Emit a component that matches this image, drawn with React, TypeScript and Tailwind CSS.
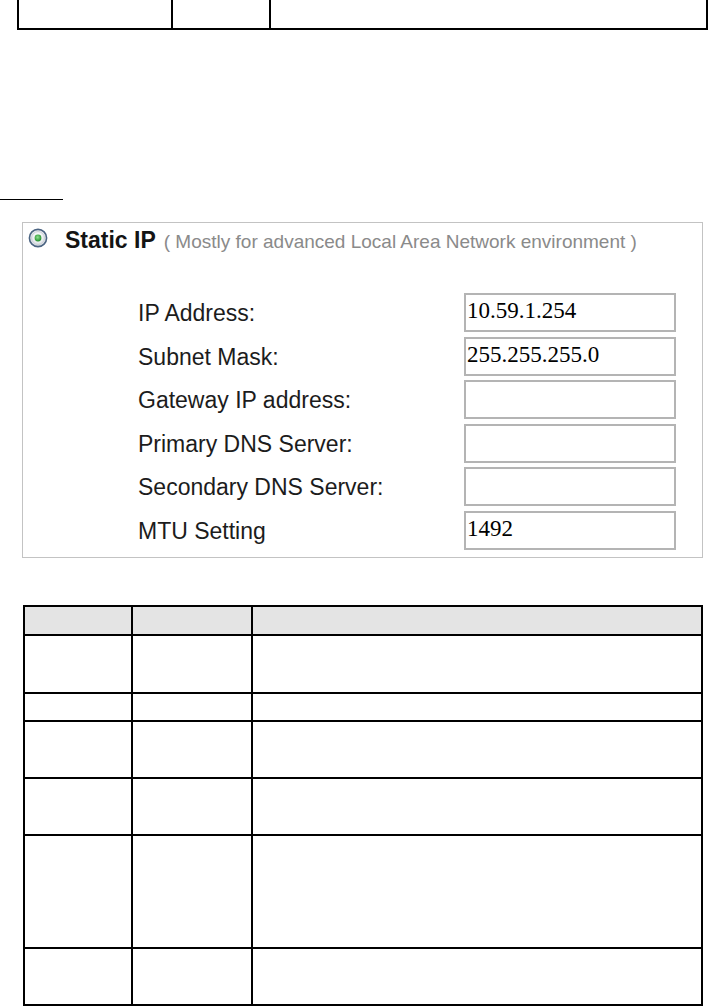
import React from 'react'

const fields = [
  { label: 'IP Address:', value: '10.59.1.254' },
  { label: 'Subnet Mask:', value: '255.255.255.0' },
  { label: 'Gateway IP address:', value: '' },
  { label: 'Primary DNS Server:', value: '' },
  { label: 'Secondary DNS Server:', value: '' },
  { label: 'MTU Setting', value: '1492' },
]

// heights of the rows of the lower table, border included
const rowHeights = ['h-[58px]', 'h-[28px]', 'h-[57px]', 'h-[57px]', 'h-[113px]', 'h-[57px]']

function Radio() {
  return (
    <svg width="20" height="20" viewBox="0 0 20 20" className="mt-[1px] shrink-0">
      <defs>
        <radialGradient id="rg" cx="50%" cy="40%" r="60%">
          <stop offset="0%" stopColor="#ffffff" />
          <stop offset="100%" stopColor="#d8dde3" />
        </radialGradient>
        <radialGradient id="dot" cx="45%" cy="40%" r="60%">
          <stop offset="0%" stopColor="#8fe08f" />
          <stop offset="100%" stopColor="#1f8f2a" />
        </radialGradient>
      </defs>
      <circle cx="10" cy="10" r="8.6" fill="url(#rg)" stroke="#4b6482" strokeWidth="1.6" />
      <circle cx="10" cy="10" r="6.4" fill="none" stroke="#c9ced6" strokeWidth="1" />
      <circle cx="10" cy="10" r="3.4" fill="url(#dot)" />
    </svg>
  )
}

export default function App() {
  return (
    <div className="w-[709px] h-[1006px] bg-white overflow-hidden font-['Liberation_Sans',Arial,sans-serif]">
      {/* cut-off table at the top */}
      <div className="ml-[17px] w-[691px] h-[30px] border-x-2 border-b-2 border-black grid grid-cols-[154px_98px_1fr]">
        <div className="border-r-2 border-black" />
        <div className="border-r-2 border-black" />
        <div />
      </div>

      <div className="mt-[169px] w-[63px] h-px bg-black" />

      {/* Static IP panel */}
      <div className="ml-[22px] mt-[22px] w-[681px] h-[336px] border border-[#c3c3c3]">
        <div className="flex items-start pl-[5px] pt-[4px]">
          <Radio />
          <div className="ml-[17px] flex items-baseline leading-[26px]">
            <span className="text-[23px] font-bold text-[#141414]">Static IP</span>
            <span className="ml-[8px] text-[19px] text-[#8a8a8a]">
              ( Mostly for advanced Local Area Network environment )
            </span>
          </div>
        </div>

        <div className="mt-[38px] ml-[115px] flex flex-col gap-[6.6px]">
          {fields.map(f => (
            <div key={f.label} className="grid grid-cols-[326px_212px] h-[37px]">
              <div className="pt-[2px] text-[23px] leading-[37px] text-[#1c1c1c]">{f.label}</div>
              <div className="border-2 border-[#b4b4b4] pl-[1px] leading-[31px] text-[23px] text-black font-['Liberation_Serif','Times_New_Roman',serif]">
                {f.value}
              </div>
            </div>
          ))}
        </div>
      </div>

      {/* lower table */}
      <div className="ml-[23px] mt-[47px] w-[680px] border-x-2 border-t-2 border-black">
        <div className="grid grid-cols-[108px_120px_1fr] h-[29px] border-b-2 border-black bg-[#e4e4e4]">
          <div className="border-r-2 border-black" />
          <div className="border-r-2 border-black" />
          <div />
        </div>
        {rowHeights.map((h, i) => (
          <div key={i} className={`grid grid-cols-[108px_120px_1fr] border-b-2 border-black ${h}`}>
            <div className="border-r-2 border-black" />
            <div className="border-r-2 border-black" />
            <div />
          </div>
        ))}
      </div>
    </div>
  )
}
